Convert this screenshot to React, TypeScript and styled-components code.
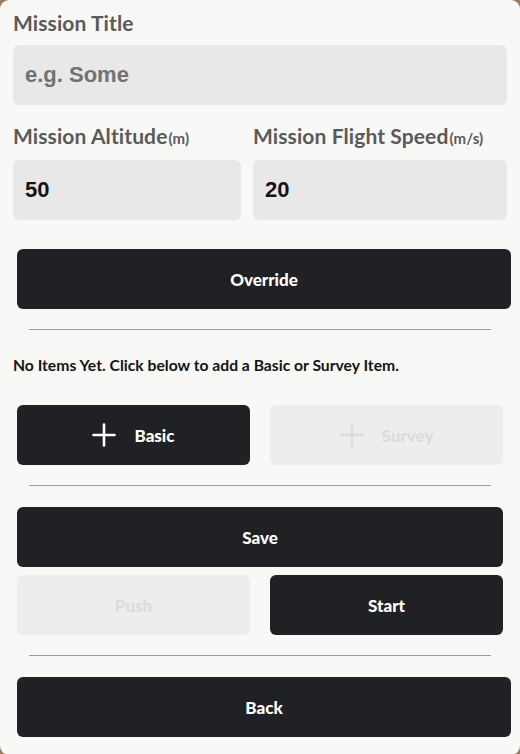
import React from "react";
import styled, { createGlobalStyle } from "styled-components";

const GlobalStyle = createGlobalStyle`
  html, body {
    margin: 0;
    padding: 0;
    background: #9c7b5e;
  }
  * { box-sizing: border-box; }
`;

const Panel = styled.div`
  min-height: 754px;
  background: #f8f8f6;
  border-radius: 9px;
  padding: 9px 13px 18px;
  display: flex;
  flex-direction: column;
  font-family: "Lato", "Noto Sans", sans-serif;
`;

const Field = styled.label`
  display: flex;
  flex-direction: column;
  min-width: 0;
`;

const Label = styled.span`
  font-size: 21px;
  font-weight: 700;
  color: #5a5a5a;
  line-height: 28px;
  margin-bottom: 8px;
  white-space: nowrap;
  letter-spacing: 0.1px;
`;

const Unit = styled.small`
  font-size: 15px;
  font-weight: 700;
  margin-left: 1px;
`;

const Input = styled.input`
  height: 60px;
  width: 100%;
  border: none;
  outline: none;
  border-radius: 6px;
  background: #e8e8e8;
  padding: 0 12px;
  font-family: "Liberation Sans", Arial, sans-serif;
  font-size: 22px;
  font-weight: 700;
  color: #151515;
  &::placeholder {
    color: #727272;
  }
`;

const FieldRow = styled.div`
  display: grid;
  grid-template-columns: 228fr 254fr;
  gap: 12px;
  margin-top: 17px;
`;

const Button = styled.button<{ $disabled?: boolean; $inset?: "wide" | "narrow" }>`
  height: 60px;
  border: none;
  border-radius: 6px;
  display: flex;
  align-items: center;
  justify-content: center;
  gap: 18px;
  font-family: "Lato", "Noto Sans", sans-serif;
  font-size: 17px;
  font-weight: 900;
  background: ${(p) => (p.$disabled ? "#ededed" : "#202124")};
  color: ${(p) => (p.$disabled ? "#dcdcdc" : "#ffffff")};
  margin: ${(p) => (p.$inset === "wide" ? "0 -4px 0 4px" : "0 4px")};
  cursor: ${(p) => (p.$disabled ? "default" : "pointer")};
`;

const ButtonPair = styled.div`
  display: grid;
  grid-template-columns: 1fr 1fr;
  gap: 20px;
  margin: 0 4px;
`;

const PairButton = styled(Button)`
  margin: 0;
`;

const Divider = styled.hr`
  border: none;
  height: 1px;
  background: #9d9d9d;
  margin: 20px 16px 21px;
`;

const Hint = styled.p`
  margin: 4px 0 30px;
  font-size: 15.7px;
  font-weight: 700;
  color: #141414;
  line-height: 20px;
`;

const Stack = styled.div<{ $top?: number }>`
  display: flex;
  flex-direction: column;
  gap: 8px;
  margin-top: ${(p) => p.$top ?? 0}px;
`;

const PlusIcon = () => (
  <svg width="24" height="24" viewBox="0 0 24 24" fill="none" stroke="currentColor" strokeWidth="2.6" strokeLinecap="round">
    <line x1="12" y1="1.5" x2="12" y2="22.5" />
    <line x1="1.5" y1="12" x2="22.5" y2="12" />
  </svg>
);

export default function App() {
  return (
    <>
      <GlobalStyle />
      <Panel>
        <Field>
          <Label>Mission Title</Label>
          <Input placeholder="e.g. Some" />
        </Field>

        <FieldRow>
          <Field>
            <Label>
              Mission Altitude<Unit>(m)</Unit>
            </Label>
            <Input defaultValue="50" />
          </Field>
          <Field>
            <Label>
              Mission Flight Speed<Unit>(m/s)</Unit>
            </Label>
            <Input defaultValue="20" />
          </Field>
        </FieldRow>

        <Stack $top={29}>
          <Button $inset="wide">Override</Button>
        </Stack>

        <Divider />

        <Hint>No Items Yet. Click below to add a Basic or Survey Item.</Hint>

        <ButtonPair>
          <PairButton>
            <PlusIcon />
            Basic
          </PairButton>
          <PairButton $disabled>
            <PlusIcon />
            Survey
          </PairButton>
        </ButtonPair>

        <Divider />

        <Stack>
          <Button>Save</Button>
          <ButtonPair>
            <PairButton $disabled>Push</PairButton>
            <PairButton>Start</PairButton>
          </ButtonPair>
        </Stack>

        <Divider />

        <Button $inset="wide">Back</Button>
      </Panel>
    </>
  );
}
